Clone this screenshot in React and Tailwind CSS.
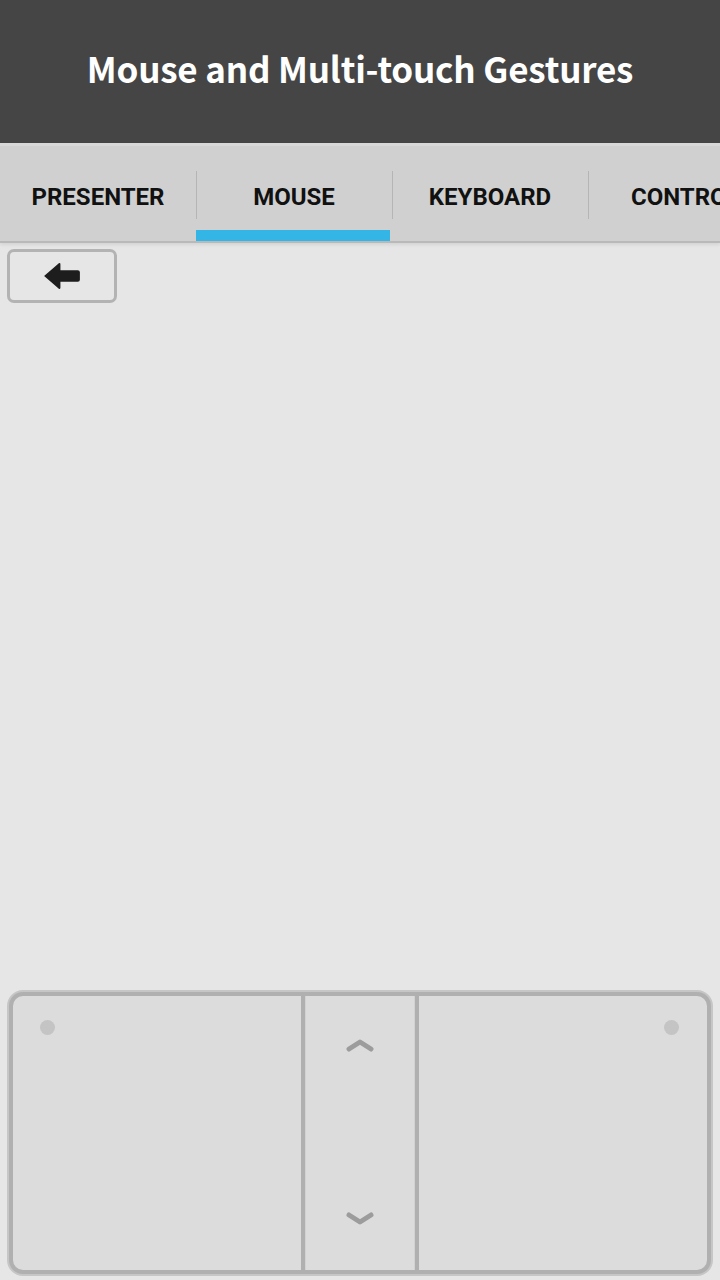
export default function App() {
  const tabs = ["PRESENTER", "MOUSE", "KEYBOARD", "CONTROL"]

  return (
    <div className="w-[720px] h-[1280px] flex flex-col bg-[#e6e6e6] overflow-hidden" style={{ fontFamily: "Roboto, 'Noto Sans', sans-serif" }}>
      <header className="h-[143px] shrink-0 bg-[#454545] flex items-center justify-center">
        <h1 className="text-white text-[35px] font-semibold tracking-[-0.2px] pb-[6px]" style={{ fontFamily: "'Noto Sans CJK KR', 'Noto Sans', sans-serif" }}>
          Mouse and Multi-touch Gestures
        </h1>
      </header>

      <nav className="h-[100px] shrink-0 bg-[#d0d0d0] border-t-[3px] border-[#d8d8d8] border-b-[2px] border-b-[#b9b9b9] flex overflow-hidden shadow-[0_2px_3px_rgba(0,0,0,0.08)]">
        {tabs.map((t, i) => (
          <div key={t} className={`relative w-[196px] shrink-0 flex items-center pt-[6px] ${i === 3 ? "justify-start pl-[43px]" : "justify-center"}`}>
            {i > 0 && <div className="absolute left-0 top-[25px] h-[48px] w-px bg-[#b5b5b5]" />}
            <span className="text-[24px] font-bold text-[#111] whitespace-nowrap">{t}</span>
            {i === 1 && <div className="absolute left-0 right-[2px] bottom-0 h-[11px] bg-[#33b5e5]" />}
          </div>
        ))}
      </nav>

      <div className="flex-1 flex flex-col px-[7px] pt-[6px] pb-[4px]">
        <button className="w-[110px] h-[54px] rounded-[7px] border-[3px] border-[#b3b3b3] flex items-center justify-center">
          <svg width="40" height="30" viewBox="0 0 38 28">
            <path d="M2 14 L16 2 Q17.5 1 17.5 3 L17.5 8.5 L34 8.5 Q36 8.5 36 10.5 L36 17.5 Q36 19.5 34 19.5 L17.5 19.5 L17.5 25 Q17.5 27 16 26 Z" fill="#1d1d1d" strokeLinejoin="round" />
          </svg>
        </button>

        <div className="flex-1" />

        <div className="h-[286px] rounded-[16px] border-[2px] border-[#c6c6c6] bg-[#c6c6c6]">
          <div className="h-full rounded-[14px] border-[4px] border-[#b0b0b0] bg-[#dcdcdc] flex overflow-hidden">
            <div className="w-[288px] relative">
              <div className="absolute left-[27px] top-[24px] w-[15px] h-[15px] rounded-full bg-[#c4c4c4]" />
            </div>
            <div className="w-[4px] bg-[#b0b0b0]" />
            <div className="w-[110px] flex flex-col items-center justify-between pt-[42px] pb-[44px] border-x border-[#d2d2d2]">
              <svg width="28" height="14" viewBox="0 0 28 14">
                <path d="M3 11 L14 4 L25 11" stroke="#9c9c9c" strokeWidth="5" fill="none" strokeLinecap="round" strokeLinejoin="round" />
              </svg>
              <svg width="28" height="14" viewBox="0 0 28 14">
                <path d="M3 3 L14 10 L25 3" stroke="#9c9c9c" strokeWidth="5" fill="none" strokeLinecap="round" strokeLinejoin="round" />
              </svg>
            </div>
            <div className="w-[4px] bg-[#b0b0b0]" />
            <div className="flex-1 relative">
              <div className="absolute right-[28px] top-[24px] w-[15px] h-[15px] rounded-full bg-[#c4c4c4]" />
            </div>
          </div>
        </div>
      </div>
    </div>
  )
}
